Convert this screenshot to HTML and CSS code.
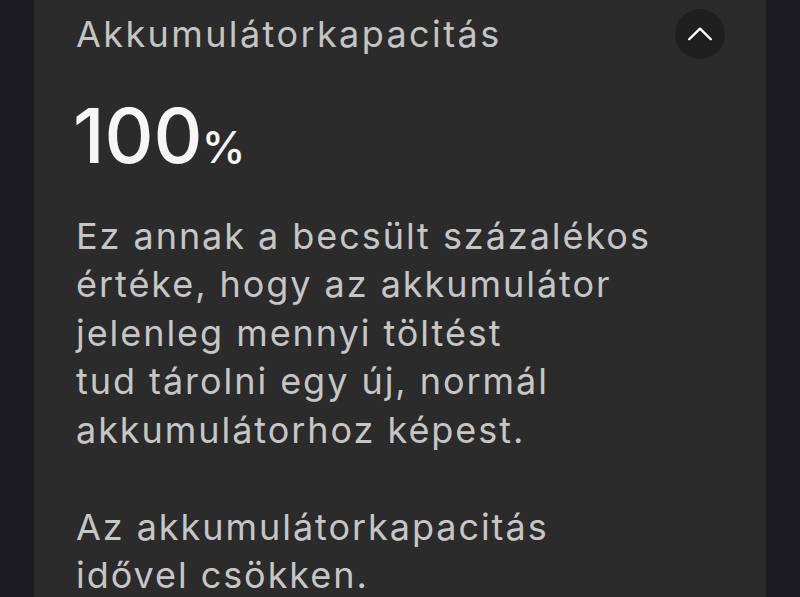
FILE: index.html
```html
<!DOCTYPE html>
<html lang="hu">
<head>
<meta charset="utf-8">
<title>Akkumulátorkapacitás</title>
<link rel="stylesheet" href="styles.css">
</head>
<body>
<div class="card">
  <div class="header">
    <h2 class="title">Akkumulátorkapacitás</h2>
    <button class="collapse" aria-label="Összecsukás">
      <svg width="24" height="24" viewBox="0 0 24 24"><path d="M1.2 17.3 L12 6.6 L22.8 17.3" fill="none" stroke="#ffffff" stroke-width="2.3" stroke-linecap="round" stroke-linejoin="round"/></svg>
    </button>
  </div>
  <div class="value"><span class="num">100</span><span class="pct">%</span></div>
  <p class="desc">Ez annak a becsült százalékos<br>értéke, hogy az akkumulátor<br>jelenleg mennyi töltést<br>tud tárolni egy új, normál<br>akkumulátorhoz képest.</p>
  <p class="desc">Az akkumulátorkapacitás<br>idővel csökken.</p>
</div>
</body>
</html>
```
FILE: styles.css
```css
html, body {
  margin: 0;
  padding: 0;
  height: 597px;
  overflow: hidden;
  background: #1c1b1f;
}

.card {
  margin: -24px 34px 0 34px;
  min-height: 700px;
  background: #2b2b2b;
  border-radius: 28px;
  padding: 33px 41px 0 42px;
  box-sizing: border-box;
  font-family: "Inter", "Open Sans", sans-serif;
}

.header {
  display: flex;
  align-items: center;
  justify-content: space-between;
  height: 50px;
}

.title {
  margin: 0;
  font-size: 36px;
  line-height: 48px;
  font-weight: 400;
  letter-spacing: 2.4px;
  color: #c4c4c4;
}

.collapse {
  width: 50px;
  height: 50px;
  border: 0;
  padding: 0;
  border-radius: 50%;
  background: #1f1f1f;
  display: flex;
  align-items: center;
  justify-content: center;
}

.value {
  margin-top: 37.5px;
  margin-left: -3px;
  line-height: 76px;
  height: 76px;
  color: #f6f6f6;
}

.num {
  font-size: 76px;
  font-weight: 500;
}

.pct {
  font-size: 44px;
  font-weight: 500;
  margin-left: -1px;
}

.desc {
  margin: 39px 0 0 0;
  font-size: 36px;
  line-height: 48.5px;
  letter-spacing: 1.95px;
  color: #c6c6c6;
}

.desc + .desc {
  margin-top: 48.5px;
}
```
